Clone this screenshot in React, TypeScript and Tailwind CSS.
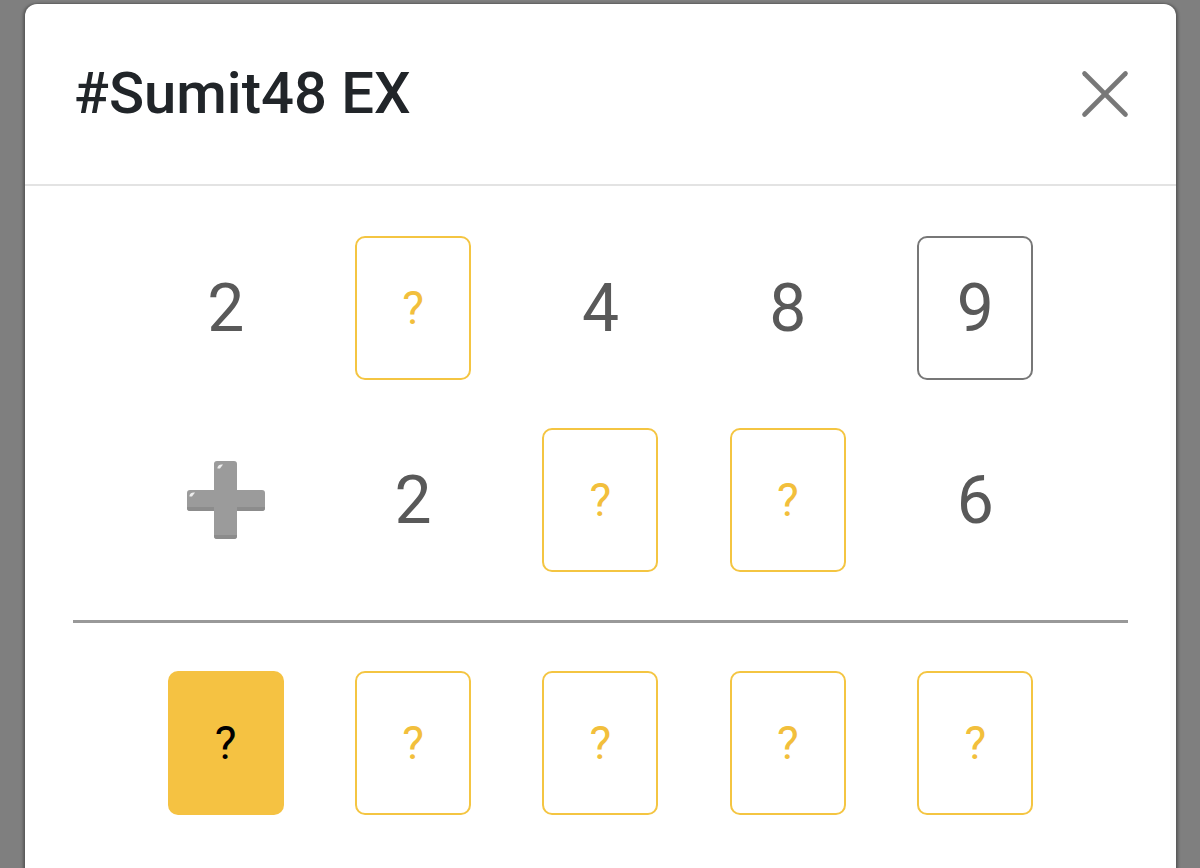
import { X } from 'lucide-react';

type Cell =
  | { kind: 'num'; value: string }
  | { kind: 'box'; value: string }
  | { kind: 'slot' }
  | { kind: 'filled' }
  | { kind: 'plus' };

const rows: Cell[][] = [
  [
    { kind: 'num', value: '2' },
    { kind: 'slot' },
    { kind: 'num', value: '4' },
    { kind: 'num', value: '8' },
    { kind: 'box', value: '9' },
  ],
  [
    { kind: 'plus' },
    { kind: 'num', value: '2' },
    { kind: 'slot' },
    { kind: 'slot' },
    { kind: 'num', value: '6' },
  ],
];

const answer: Cell[] = [
  { kind: 'filled' },
  { kind: 'slot' },
  { kind: 'slot' },
  { kind: 'slot' },
  { kind: 'slot' },
];

function PlusSign() {
  return (
    <svg width="78" height="78" viewBox="0 0 78 78">
      <path
        d="M30 0h17a3 3 0 0 1 3 3v26h25a3 3 0 0 1 3 3v15a3 3 0 0 1-3 3H50v25a3 3 0 0 1-3 3H30a3 3 0 0 1-3-3V50H3a3 3 0 0 1-3-3V32a3 3 0 0 1 3-3h24V3a3 3 0 0 1 3-3z"
        fill="#9b9b9b"
      />
      <path d="M27 74h23v1a3 3 0 0 1-3 3H30a3 3 0 0 1-3-3z" fill="#8c8c8c" />
      <path d="M0 46h27v4H3a3 3 0 0 1-3-3zM50 46h28v1a3 3 0 0 1-3 3H50z" fill="#8c8c8c" />
      <path d="M30.5 6.5c0.5-2 2-3 4-3h1.5l-3 4h-2.5z" fill="#ededed" />
      <path d="M2.5 34.5c0.5-2 2-3 4-3h1.5l-3 4h-2.5z" fill="#ededed" />
    </svg>
  );
}

function CellView({ cell }: { cell: Cell }) {
  const card = 'w-[116px] h-[144px] rounded-[10px] flex items-center justify-center';
  if (cell.kind === 'num') {
    return (
      <div className={`${card} text-[66px] text-[#595959]`}>{cell.value}</div>
    );
  }
  if (cell.kind === 'box') {
    return (
      <div className={`${card} border-2 border-[#777777] text-[66px] text-[#595959]`}>
        {cell.value}
      </div>
    );
  }
  if (cell.kind === 'slot') {
    return (
      <div className={`${card} border-2 border-[#f4c542] text-[46px] text-[#f2bf3c]`}>?</div>
    );
  }
  if (cell.kind === 'filled') {
    return <div className={`${card} bg-[#f5c242] text-[46px] text-black`}>?</div>;
  }
  return (
    <div className={card}>
      <PlusSign />
    </div>
  );
}

function CellRow({ cells }: { cells: Cell[] }) {
  return (
    <div className="grid grid-cols-5 w-[937px] mx-auto">
      {cells.map((c, i) => (
        <div key={i} className="flex justify-center">
          <CellView cell={c} />
        </div>
      ))}
    </div>
  );
}

export default function App() {
  return (
    <div
      className="w-[1200px] h-[868px] bg-[#7f7f7f] overflow-hidden pt-[4px] pl-[25px]"
      style={{ fontFamily: 'Roboto, "Noto Sans", sans-serif' }}
    >
      <div className="w-[1151px] h-[900px] bg-white rounded-t-[12px] shadow-[-2px_0_3px_rgba(0,0,0,0.3),2px_0_3px_rgba(0,0,0,0.3)]">
        <div className="h-[182px] flex items-center justify-between pl-[49px] pr-[30px] border-b-2 border-[#e3e3e3]">
          <h2 className="text-[58px] font-medium text-[#212529] leading-none pb-[2px]">#Sumit48 EX</h2>
          <X className="w-[82px] h-[82px] text-[#787878]" strokeWidth={1.35} />
        </div>

        <div className="pt-[50px] flex flex-col">
          <div className="flex flex-col gap-[48px]">
            {rows.map((r, i) => (
              <CellRow key={i} cells={r} />
            ))}
          </div>
          <div className="mx-[48px] my-[48px] h-[3px] bg-[#999999]" />
          <CellRow cells={answer} />
        </div>
      </div>
    </div>
  );
}
